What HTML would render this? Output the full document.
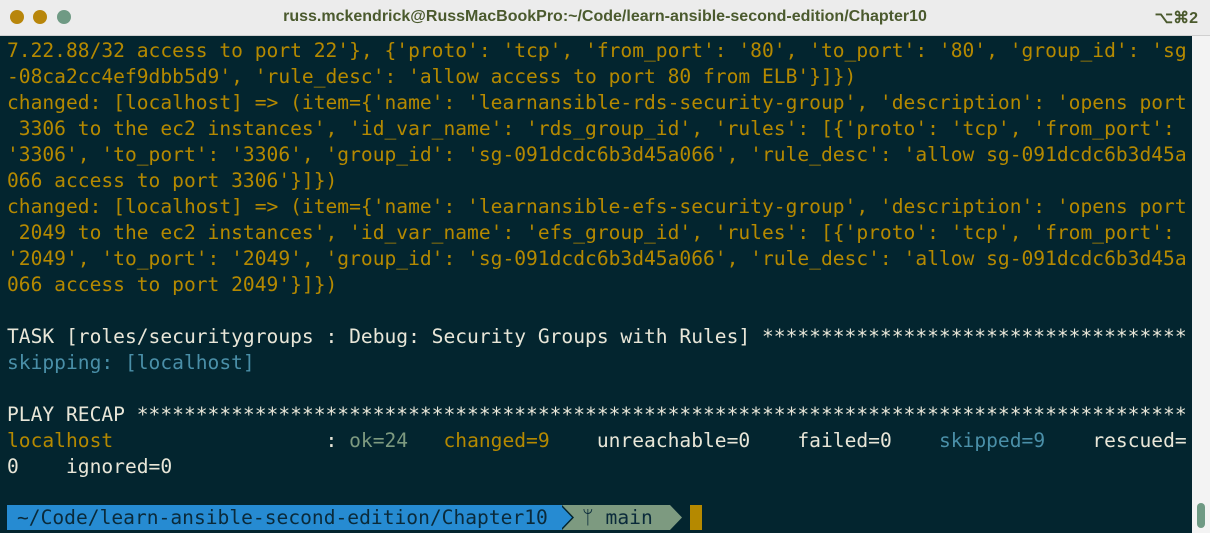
<!DOCTYPE html>
<html><head><meta charset="utf-8"><style>
html,body{margin:0;padding:0;width:1210px;height:533px;overflow:hidden;background:#ececec;}
.title{position:absolute;left:0;top:0;width:1210px;height:35px;background:#ececec;border-bottom:1px solid #d0d0d0;font-family:"Liberation Sans",sans-serif;font-weight:bold;font-size:16px;color:#4b5a2e;}
.title .t{position:absolute;left:0;width:1210px;text-align:center;top:8px;}
.title .k{position:absolute;right:12px;top:8px;font-weight:bold;}
.dot{position:absolute;top:10px;width:14px;height:14px;border-radius:50%;background:#b8860b;}
.term{position:absolute;left:0;top:36px;width:1192px;height:497px;background:#03252f;}
.gut{position:absolute;left:1192px;top:36px;width:18px;height:497px;background:#f3f3f3;}
.thumb{position:absolute;left:1197px;top:503px;width:8px;height:25px;border-radius:4px;background:#6f9a84;}
pre{position:absolute;left:7px;top:38px;width:1180px;overflow:hidden;margin:0;font-family:"DejaVu Sans Mono","Liberation Mono",monospace;font-size:19.6px;line-height:26px;color:#b58900;white-space:pre;}
.w{color:#e8e6d8}.c{color:#4a8fa8}.g{color:#7d9a80}.y{color:#b58900}
.pl{position:absolute;top:505px;height:25px;font-family:"DejaVu Sans Mono",monospace;font-size:19.6px;line-height:25px;}
</style></head><body>
<div class="title"><div class="dot" style="left:10px"></div><div class="dot" style="left:33px"></div><div class="dot" style="left:57px;background:#6f9a84"></div><div class="t">russ.mckendrick@RussMacBookPro:~/Code/learn-ansible-second-edition/Chapter10</div><div class="k">⌥⌘2</div></div>
<div class="term"></div><div class="gut"></div><div class="thumb"></div>
<pre>7.22.88/32 access to port 22'}, {'proto': 'tcp', 'from_port': '80', 'to_port': '80', 'group_id': 'sg
-08ca2cc4ef9dbb5d9', 'rule_desc': 'allow access to port 80 from ELB'}]})
changed: [localhost] => (item={'name': 'learnansible-rds-security-group', 'description': 'opens port
 3306 to the ec2 instances', 'id_var_name': 'rds_group_id', 'rules': [{'proto': 'tcp', 'from_port':
'3306', 'to_port': '3306', 'group_id': 'sg-091dcdc6b3d45a066', 'rule_desc': 'allow sg-091dcdc6b3d45a
066 access to port 3306'}]})
changed: [localhost] => (item={'name': 'learnansible-efs-security-group', 'description': 'opens port
 2049 to the ec2 instances', 'id_var_name': 'efs_group_id', 'rules': [{'proto': 'tcp', 'from_port':
'2049', 'to_port': '2049', 'group_id': 'sg-091dcdc6b3d45a066', 'rule_desc': 'allow sg-091dcdc6b3d45a
066 access to port 2049'}]})

<span class="w">TASK [roles/securitygroups : Debug: Security Groups with Rules] ************************************</span>
<span class="c">skipping: [localhost]</span>

<span class="w">PLAY RECAP *****************************************************************************************</span>
localhost                  <span class="w">:</span> <span class="g">ok=24</span>   changed=9    <span class="w">unreachable=0    failed=0</span>    <span class="c">skipped=9</span>    <span class="w">rescued=</span>
<span class="w">0    ignored=0</span>
</pre>
<div class="pl" style="left:7px;width:555px;background:#268bd2;color:#0a2a3a;padding-left:10px;box-sizing:border-box;">~/Code/learn-ansible-second-edition/Chapter10</div>
<svg style="position:absolute;left:560px;top:505px" width="125" height="25"><polygon points="0,0 12,12.5 0,25" fill="#268bd2"/><polygon points="2,0 110,0 122,12.5 110,25 2,25 14,12.5" fill="#7d9a80"/></svg>
<div class="pl" style="left:582px;color:#0a2a3a">ᛘ main</div>
<div style="position:absolute;left:690px;top:505px;width:12px;height:25px;background:#b58900"></div>
</body></html>
